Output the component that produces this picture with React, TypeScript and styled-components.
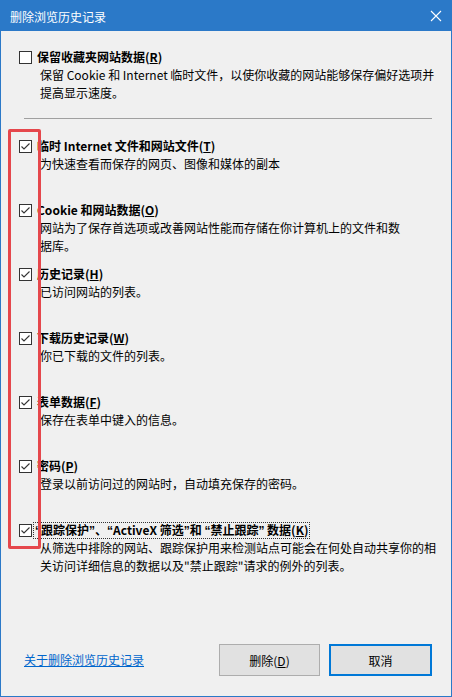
import React from "react";
import styled, { createGlobalStyle } from "styled-components";

const GlobalStyle = createGlobalStyle`
  html, body { margin: 0; padding: 0; background: #f0f0f0; }
  body {
    font-family: "Microsoft YaHei", "Noto Sans CJK SC", sans-serif;
    font-size: 12px;
    color: #000;
  }
  * { box-sizing: border-box; }
`;

const Window = styled.div`
  position: relative;
  width: 452px;
  height: 697px;
  background: #f0f0f0;
  border: 1px solid #2b79c8;
  border-top: none;
  display: flex;
  flex-direction: column;
`;

const TitleBar = styled.div`
  height: 31px;
  margin: 0 -1px;
  background: #2b79c8;
  color: #fff;
  display: flex;
  align-items: center;
  justify-content: space-between;
  padding: 1px 10px 0 10px;
  font-size: 12px;
`;

const Close = styled.svg`
  display: block;
`;

const Top = styled.div`
  padding: 17px 0 0 18px;
`;

const Separator = styled.div`
  margin: 16px 19px 0 23px;
  height: 1px;
  background: #a0a0a0;
`;

const List = styled.div`
  padding: 18px 0 0 18px;
  display: grid;
  grid-auto-rows: 64px;
`;

const Item = styled.div`
  display: grid;
  grid-template-columns: 13px auto;
  grid-auto-rows: min-content;
  column-gap: 3px;
  align-content: start;
`;

const Box = styled.div`
  width: 13px;
  height: 13px;
  margin-top: 2.5px;
  border: 1px solid #333;
  background: #fff;
  display: flex;
  align-items: center;
  justify-content: center;
`;

const Label = styled.div<{ $focused?: boolean }>`
  font-weight: bold;
  line-height: 18px;
  height: 18px;
  white-space: nowrap;
  & > span {
    display: inline-block;
    line-height: 14px;
    padding: 0 1px;
    margin-left: ${(p) => (p.$focused ? "-2px" : "0")};
    border: 1px dotted ${(p) => (p.$focused ? "#333" : "transparent")};
    vertical-align: top;
    margin-top: 1px;
  }
`;

const Q = styled.span`
  font-family: "Liberation Sans", sans-serif;
  font-weight: bold;
`;

const Desc = styled.div`
  grid-column: 2;
  margin-left: 5px;
  line-height: 18px;
  white-space: nowrap;
  color: #000;
`;

const Footer = styled.div`
  margin-top: auto;
  padding: 0 19px 20px 23px;
  display: flex;
  align-items: center;
`;

const Link = styled.a`
  color: #0066cc;
  text-decoration: underline;
  cursor: pointer;
  margin-right: auto;
  line-height: 18px;
`;

const Button = styled.button<{ $default?: boolean; $w: number }>`
  width: ${(p) => p.$w}px;
  height: 32px;
  margin-left: 9px;
  font-family: inherit;
  font-size: 12px;
  color: #000;
  background: #e1e1e1;
  border: ${(p) => (p.$default ? "2px solid #0078d7" : "1px solid #adadad")};
  padding: 0;
`;

const Highlight = styled.div`
  position: absolute;
  left: 7px;
  top: 129px;
  width: 33px;
  height: 420px;
  border: 3px solid #e5474c;
  border-radius: 2px;
  pointer-events: none;
`;

const Check = () => (
  <svg width="11" height="11" viewBox="0 0 11 11">
    <polyline points="1.5,5.5 4,8 9.5,2.5" fill="none" stroke="#333" strokeWidth="1.1" />
  </svg>
);

type Opt = { label: React.ReactNode; desc: React.ReactNode[]; focused?: boolean };

const options: Opt[] = [
  {
    label: <>临时 Internet 文件和网站文件(<u>T</u>)</>,
    desc: ["为快速查看而保存的网页、图像和媒体的副本"],
  },
  {
    label: <>Cookie 和网站数据(<u>O</u>)</>,
    desc: ["网站为了保存首选项或改善网站性能而存储在你计算机上的文件和数", "据库。"],
  },
  { label: <>历史记录(<u>H</u>)</>, desc: ["已访问网站的列表。"] },
  { label: <>下载历史记录(<u>W</u>)</>, desc: ["你已下载的文件的列表。"] },
  { label: <>表单数据(<u>F</u>)</>, desc: ["保存在表单中键入的信息。"] },
  { label: <>密码(<u>P</u>)</>, desc: ["登录以前访问过的网站时，自动填充保存的密码。"] },
  {
    label: (
      <>
        <Q>“</Q>跟踪保护<Q>”</Q>、<Q>“</Q>ActiveX 筛选<Q>”</Q>和 <Q>“</Q>禁止跟踪<Q>”</Q> 数据(<u>K</u>)
      </>
    ),
    desc: [
      "从筛选中排除的网站、跟踪保护用来检测站点可能会在何处自动共享你的相",
      "关访问详细信息的数据以及\"禁止跟踪\"请求的例外的列表。",
    ],
    focused: true,
  },
];

export default function App() {
  return (
    <>
      <GlobalStyle />
      <Window>
        <TitleBar>
          <span>删除浏览历史记录</span>
          <Close width="12" height="12" viewBox="0 0 12 12">
            <path d="M1 1 L11 11 M11 1 L1 11" stroke="#fff" strokeWidth="1.1" />
          </Close>
        </TitleBar>
        <Top>
          <Item>
            <Box />
            <Label>
              <span>保留收藏夹网站数据(<u>R</u>)</span>
            </Label>
            <Desc>
              保留 Cookie 和 Internet 临时文件，以使你收藏的网站能够保存偏好选项并
              <br />
              提高显示速度。
            </Desc>
          </Item>
        </Top>
        <Separator />
        <List>
          {options.map((o, i) => (
            <Item key={i}>
              <Box>
                <Check />
              </Box>
              <Label $focused={o.focused}>
                <span>{o.label}</span>
              </Label>
              <Desc>
                {o.desc.map((d, j) => (
                  <React.Fragment key={j}>
                    {j > 0 && <br />}
                    {d}
                  </React.Fragment>
                ))}
              </Desc>
            </Item>
          ))}
        </List>
        <Footer>
          <Link>关于删除浏览历史记录</Link>
          <Button $w={101}>
            删除(<u>D</u>)
          </Button>
          <Button $w={103} $default>
            取消
          </Button>
        </Footer>
        <Highlight />
      </Window>
    </>
  );
}
